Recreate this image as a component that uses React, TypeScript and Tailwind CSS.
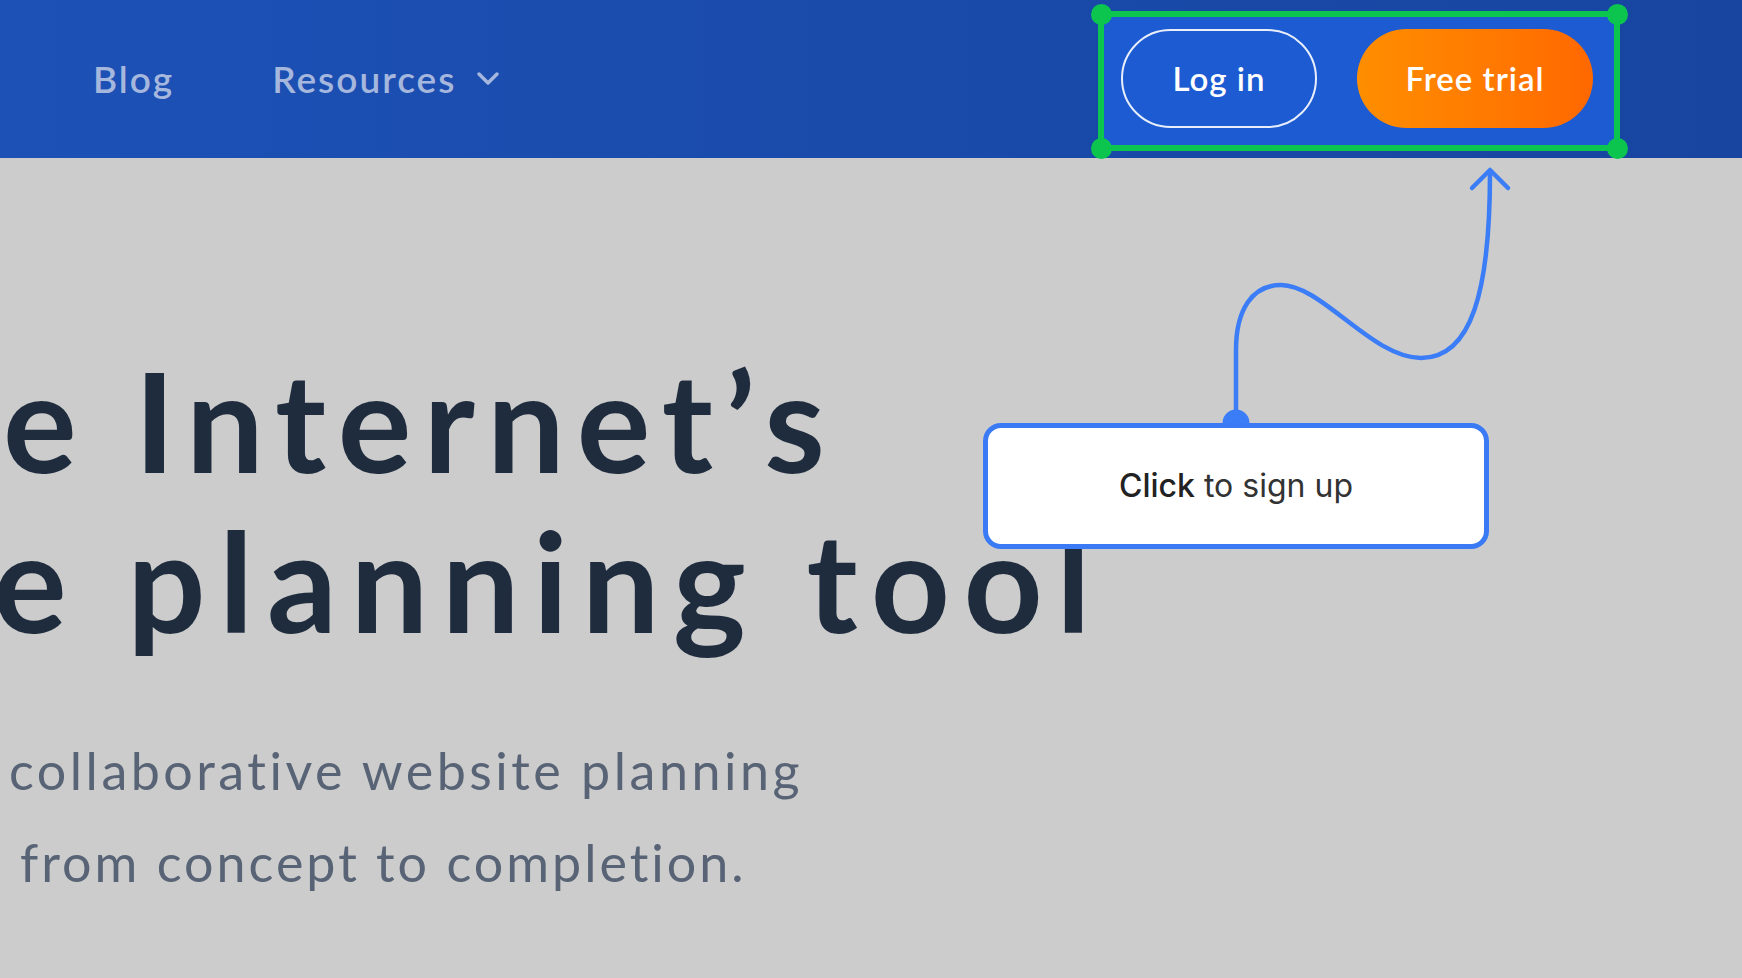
import React from 'react';

const Corner: React.FC<{ className: string }> = ({ className }) => (
  <span className={`absolute w-[21px] h-[21px] rounded-full bg-[#0bc54f] ${className}`} />
);

export default function App() {
  return (
    <div className="relative w-full h-[978px] overflow-hidden bg-[#cccccc] font-['Lato','Liberation_Sans',sans-serif]">
      {/* Top nav */}
      <header className="h-[158px] flex items-start pl-[93px] pr-[122px] bg-gradient-to-r from-[#1d51b6] to-[#1745a0]">
        <nav className="self-center flex items-center gap-[98px] text-[37px] font-semibold tracking-[2px] text-[#a6b7de]">
          <span>Blog</span>
          <span className="flex items-center gap-[20px]">
            Resources
            <svg width="24" height="16" viewBox="0 0 24 16" fill="none" stroke="#a6b7de" strokeWidth="3.5" strokeLinecap="round" strokeLinejoin="round">
              <polyline points="3,3 12,12 21,3" />
            </svg>
          </span>
        </nav>

        {/* selected element outline */}
        <div className="relative shrink-0 ml-auto mt-[11px] w-[522px] h-[140px] flex items-start gap-[40px] pl-[17px] pt-[12px] border-[6px] border-[#0bc54f] bg-[#1c5bd2]">
          <Corner className="-left-[13.5px] -top-[13.5px]" />
          <Corner className="-right-[13.5px] -top-[13.5px]" />
          <Corner className="-left-[13.5px] -bottom-[13.5px]" />
          <Corner className="-right-[13.5px] -bottom-[13.5px]" />
          <button className="w-[196px] h-[99px] shrink-0 rounded-full border-2 border-white/90 text-white text-[33px] font-semibold tracking-[1px]">
            Log in
          </button>
          <button className="w-[236px] h-[99px] shrink-0 rounded-full bg-gradient-to-r from-[#ff8e00] to-[#ff6800] text-white text-[33px] font-semibold tracking-[1px]">
            Free trial
          </button>
        </div>
      </header>

      {/* Hero */}
      <main>
        <h1 className="mt-[182px] text-[138px] leading-[160px] font-bold text-[#1f2c3e] whitespace-nowrap">
          <div className="ml-[3px] tracking-[12px]">e Internet’s</div>
          <div className="-ml-[7px] tracking-[13.5px]">e planning tool</div>
        </h1>
        <div className="mt-[64px] text-[52px] leading-[92px] text-[#586476] whitespace-nowrap">
          <div className="ml-[9px] tracking-[3.5px]">collaborative website planning</div>
          <div className="ml-[20px] tracking-[3px]">from concept to completion.</div>
        </div>
      </main>

      {/* Annotation connector */}
      <svg className="absolute inset-0 pointer-events-none" width="1742" height="978" viewBox="0 0 1742 978" fill="none">
        <circle cx="1236" cy="423" r="13.5" fill="#3b7cf7" />
        <path
          d="M1236 420 L1236 350 C1236 310 1252 285 1281 285 C1322 285 1372 358 1421 358 C1472 358 1490 290 1490 172"
          stroke="#3b7cf7"
          strokeWidth="4.5"
          strokeLinecap="round"
        />
        <path d="M1472 188 L1490 170 L1508 188" stroke="#3b7cf7" strokeWidth="4.5" strokeLinecap="round" strokeLinejoin="round" />
      </svg>

      {/* Tooltip */}
      <div className="absolute left-[983px] top-[423px] w-[506px] h-[126px] flex items-center justify-center rounded-[18px] border-[5px] border-[#3a7bf5] bg-white font-['Inter','Liberation_Sans',sans-serif] text-[32px] text-[#333333]">
        <span className="font-medium text-[#222222]">Click</span>
        <span>&nbsp;to sign up</span>
      </div>
    </div>
  );
}
